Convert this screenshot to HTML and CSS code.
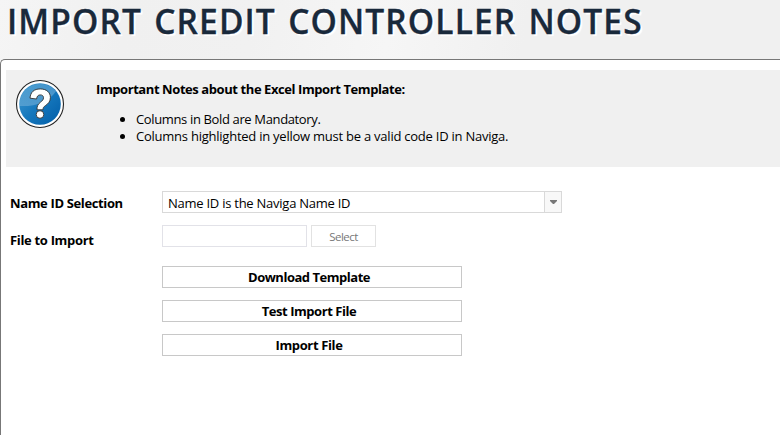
FILE: index.html
```html
<!DOCTYPE html>
<html lang="en">
<head>
<meta charset="utf-8">
<title>Import Credit Controller Notes</title>
<link rel="stylesheet" href="styles.css">
</head>
<body>
<header class="page-header"><h1 class="page-title"><span>IMPORT CREDIT CONTROLLER NOTES</span></h1></header>
<main class="panel">
  <section class="notice">
    <svg class="help-icon" viewBox="0 0 50 50" aria-hidden="true">
      <defs>
        <linearGradient id="blue" x1="0" y1="0" x2="1" y2="1">
          <stop offset="0" stop-color="#439bd0"/><stop offset=".5" stop-color="#1678bd"/><stop offset="1" stop-color="#005da8"/>
        </linearGradient>
        <linearGradient id="shine" x1="0" y1="0" x2="1" y2="1">
          <stop offset="0" stop-color="#fff" stop-opacity=".05"/><stop offset="1" stop-color="#fff" stop-opacity=".32"/>
        </linearGradient>
      </defs>
      <circle cx="25" cy="25" r="23.5" fill="#fff" stroke="#222" stroke-width="1.1"/>
      <circle cx="25" cy="25" r="20.8" fill="url(#blue)"/>
      <path d="M4.4 27A20.8 20.8 0 0 1 41 12.2Q30 28 4.4 27Z" fill="url(#shine)"/>
      <path d="M15 19.2C15.4 13.1 19.1 9.9 25.3 9.9C31.5 9.9 35.4 13.4 35.4 18.5C35.4 22.4 33.4 24.6 30.7 26.4C28.5 27.9 28 28.7 28 30.8H22C21.8 27.1 23 25.1 25.6 23.1C27.5 21.6 28.5 20.6 28.5 18.7C28.5 16.9 27.3 15.9 25.3 15.9C23.1 15.9 21.9 17.2 21.6 20Z" fill="#fff" stroke="#333" stroke-width=".9"/>
      <circle cx="25" cy="35.5" r="3.8" fill="#fff" stroke="#333" stroke-width=".9"/>
    </svg>
    <div class="notice-body">
      <h2 class="notice-title"><span>Important Notes about the Excel Import Template:</span></h2>
      <ul class="notice-list">
        <li><span class="n1">Columns in Bold are Mandatory.</span></li>
        <li><span class="n2">Columns highlighted in yellow must be a valid code ID in Naviga.</span></li>
      </ul>
    </div>
  </section>
  <section class="form">
    <div class="label"><span class="l1">Name ID Selection</span></div>
    <div class="combo"><span class="combo-value">Name ID is the Naviga Name ID</span><span class="combo-arrow"><svg width="7" height="4" viewBox="0 0 7 4"><path d="M0 0H7V1L4 4H3L0 1Z" fill="#777"/></svg></span></div>
    <div class="label"><span class="l2">File to Import</span></div>
    <div class="file"><div class="file-name"></div><div class="file-select"><span>Select</span></div></div>
    <div class="actions">
      <div class="action"><span class="a1">Download Template</span></div>
      <div class="action"><span class="a2">Test Import File</span></div>
      <div class="action"><span class="a3">Import File</span></div>
    </div>
  </section>
</main>
</body>
</html>
```
FILE: styles.css
```css
* { box-sizing: border-box; }
body {
  margin: 0;
  height: 435px;
  overflow: hidden;
  display: flex;
  flex-direction: column;
  background: linear-gradient(100deg, #f5f5f5 0, #f0f0f0 15%, #f1f1f1 30%, #f6f6f6 46%, #f0f0f0 62%, #f0f0f0 100%);
  font: 13px/17px "Open Sans", "Noto Sans", sans-serif;
  color: #000;
}
.page-header { height: 59px; flex: none; padding-left: 7px; }
.page-title {
  margin: 0;
  font-size: 33.5px;
  line-height: 42px;
  font-weight: 600;
  letter-spacing: 1.1px;
  word-spacing: 2.5px;
  color: #19293b;
  -webkit-text-stroke: .3px #19293b;
  white-space: nowrap;
  text-shadow: 2px 2px 1px #fff;
}
.panel {
  flex: 1;
  border: 1px solid #777;
  border-width: 1px 0 0 1px;
  border-top-left-radius: 5px;
  background: #fff;
  padding: 10px 0 0 5px;
}
.notice {
  height: 97px;
  display: flex;
  background: #f0f0f0;
  padding: 9px 0 0 9px;
}
.help-icon { width: 50px; height: 50px; flex: none; }
.notice-body { padding: 2px 0 0 31px; white-space: nowrap; }
.notice-title { margin: 0 0 13px; font-size: 13px; line-height: 17px; font-weight: 700; letter-spacing: -.42px; }
.notice-list { margin: 0; padding-left: 40px; }
.n1 { letter-spacing: -.36px; }
.n2 { letter-spacing: -.24px; }
.form {
  display: grid;
  grid-template-columns: 152px 400px;
  grid-template-rows: 22px 22px auto;
  row-gap: 12px;
  padding: 24px 0 0 4px;
}
.label { font-weight: 700; line-height: 24px; white-space: nowrap; }
.label:nth-of-type(3) { line-height: 30px; }
.l1 { letter-spacing: -.36px; }
.l2 { letter-spacing: -.32px; }
.combo { display: flex; border: 1px solid #d9d9d9; }
.combo-value { flex: 1; padding-left: 5px; line-height: 23px; letter-spacing: -.25px; }
.combo-arrow {
  width: 17px;
  border-left: 1px solid #d9d9d9;
  background: #f8f8f8;
  display: flex;
  align-items: center;
  justify-content: center;
}
.file { display: flex; gap: 4px; }
.file-name { width: 145px; border: 1px solid #e2e2e8; }
.file-select {
  width: 65px;
  border: 1px solid #e2e2e2;
  text-align: center;
  font-size: 11.5px;
  line-height: 21px;
  letter-spacing: -.5px;
  color: #777;
}
.actions { grid-column: 2; display: grid; gap: 12px; width: 300px; margin-top: 7px; }
.action {
  height: 22px;
  border: 1px solid #c8c8c8;
  padding-right: 6px;
  text-align: center;
  font-weight: 700;
  line-height: 21px;
}
.a1 { letter-spacing: -.48px; }
.a2 { letter-spacing: -.44px; }
.a3 { letter-spacing: -.36px; }
```
